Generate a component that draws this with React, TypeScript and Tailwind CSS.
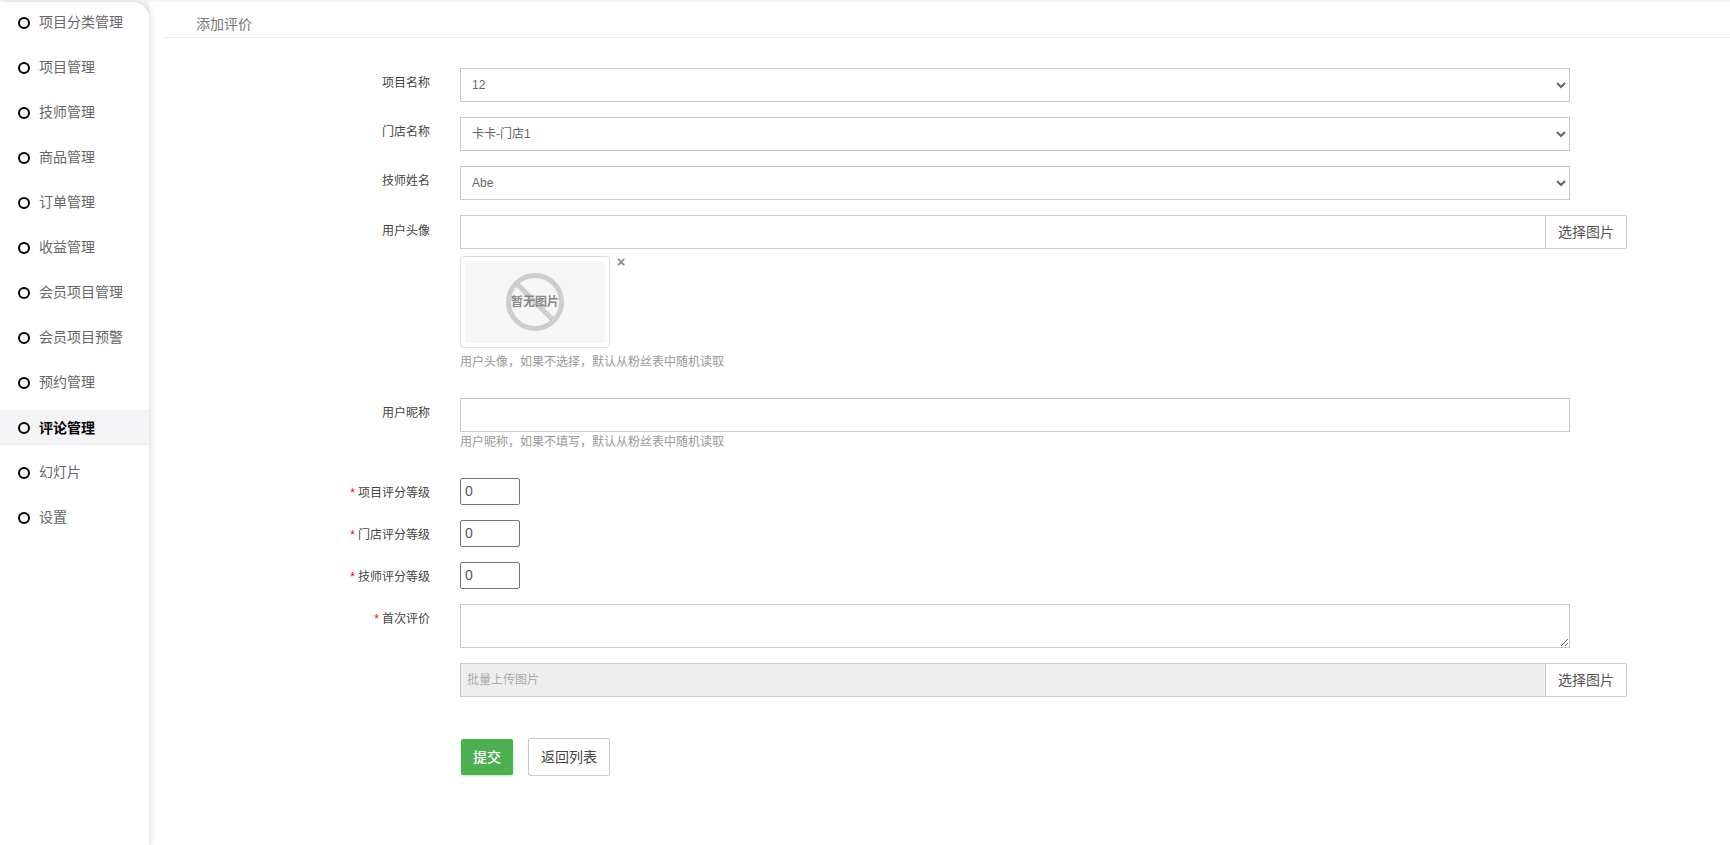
const navItems = [
  '项目分类管理',
  '项目管理',
  '技师管理',
  '商品管理',
  '订单管理',
  '收益管理',
  '会员项目管理',
  '会员项目预警',
  '预约管理',
  '评论管理',
  '幻灯片',
  '设置',
]

const fieldClass = 'h-[34px] w-[1110px] border border-[#c8c8c8] bg-white px-[7px] text-xs text-[#666] outline-none'
const pickButtonClass = 'h-[34px] w-[82px] -ml-px rounded-r-[2px] border border-[#c8c8c8] bg-white text-[14px] text-[#555]'

function Label({ text, required, className = '' }: { text: string; required?: boolean; className?: string }) {
  return (
    <label className={`w-[430px] shrink-0 text-right text-xs text-[#444] ${className}`}>
      {required && <span className="mr-[3px] text-[#f00]">*</span>}
      {text}
    </label>
  )
}

function Sidebar() {
  return (
    <aside className="z-10 h-full w-[149px] shrink-0 rounded-tr-[16px] bg-white shadow-[2px_0_6px_rgba(0,0,0,0.12)]">
      <nav className="-mt-[2px] flex flex-col">
        {navItems.map((item) => {
          const active = item === '评论管理'
          return (
            <div
              key={item}
              className={`flex shrink-0 items-center pl-[18px] text-[14px] ${
                active
                  ? 'my-[5px] h-[35px] border-y border-[#eeeef3] bg-[#f4f4f6] pt-[1px] font-bold text-black'
                  : 'h-[45px] text-[#666]'
              }`}
            >
              <span className="mr-[9px] size-[12px] rounded-full border-2 border-black" />
              {item}
            </div>
          )
        })}
      </nav>
    </aside>
  )
}

function NoImage() {
  return (
    <div className="flex h-[92px] w-[150px] items-center justify-center rounded-[4px] border border-[#ddd] bg-white p-[4px]">
      <div className="relative flex h-[82px] w-[140px] items-center justify-center bg-[#f6f6f6]">
        <svg width="60" height="60" viewBox="0 0 60 60" className="absolute left-[40px] top-[11px]">
          <circle cx="30" cy="30" r="26.5" fill="none" stroke="#cdcdcd" strokeWidth="5" />
          <line x1="11" y1="11" x2="49" y2="49" stroke="#cdcdcd" strokeWidth="5" />
        </svg>
        <span className="relative text-xs font-bold text-[#888]">暂无图片</span>
      </div>
    </div>
  )
}

export default function App() {
  return (
    <div className="flex h-screen w-full overflow-hidden bg-[#f4f4f4] pt-[2px] font-['Liberation_Sans','Noto_Sans_CJK_SC',sans-serif]">
      <Sidebar />

      <main className="flex-1 bg-white">
        <div className="ml-[15px] h-[36px] border-b border-[#eee] pl-[32px] pt-[12px] text-[14px] leading-[20px] text-[#777]">
          添加评价
        </div>

        <form className="-ml-[149px] flex flex-col pt-[30px]">
          <div className="flex gap-[30px]">
            <Label text="项目名称" className="pt-[7px]" />
            <select className={fieldClass} defaultValue="12">
              <option>12</option>
            </select>
          </div>

          <div className="mt-[15px] flex gap-[30px]">
            <Label text="门店名称" className="pt-[7px]" />
            <select className={fieldClass} defaultValue="卡卡-门店1">
              <option>卡卡-门店1</option>
            </select>
          </div>

          <div className="mt-[15px] flex gap-[30px]">
            <Label text="技师姓名" className="pt-[7px]" />
            <select className={fieldClass} defaultValue="Abe">
              <option>Abe</option>
            </select>
          </div>

          <div className="mt-[15px] flex gap-[30px]">
            <Label text="用户头像" className="pt-[8px]" />
            <div>
              <div className="flex">
                <input className="h-[34px] w-[1086px] border border-[#c8c8c8] bg-white px-[6px] text-xs outline-none" />
                <button type="button" className={pickButtonClass}>选择图片</button>
              </div>
              <div className="mt-[7px] flex items-start">
                <NoImage />
                <span className="ml-[7px] text-[14px] font-bold leading-[12px] text-[#888]">×</span>
              </div>
              <p className="mt-[5px] text-xs leading-[18px] text-[#999]">用户头像，如果不选择，默认从粉丝表中随机读取</p>
            </div>
          </div>

          <div className="mt-[27px] flex gap-[30px]">
            <Label text="用户昵称" className="pt-[7px]" />
            <div>
              <input className={fieldClass} />
              <p className="mt-[1px] text-xs leading-[18px] text-[#999]">用户昵称，如果不填写，默认从粉丝表中随机读取</p>
            </div>
          </div>

          {['项目评分等级', '门店评分等级', '技师评分等级'].map((text, i) => (
            <div key={text} className={`flex items-center gap-[30px] ${i === 0 ? 'mt-[27px]' : 'mt-[15px]'}`}>
              <Label text={text} required className="pt-[3px]" />
              <input
                type="number"
                defaultValue={0}
                className="h-[27px] w-[60px] rounded-[2px] border border-[#767676] bg-white px-[4px] pb-[1px] text-[14px] text-[#555] outline-none"
              />
            </div>
          ))}

          <div className="mt-[15px] flex gap-[30px]">
            <Label text="首次评价" required className="pt-[7px]" />
            <textarea className="block h-[44px] w-[1110px] border border-[#c8c8c8] bg-white outline-none" />
          </div>

          <div className="mt-[15px] flex gap-[30px]">
            <div className="w-[430px] shrink-0" />
            <div className="flex">
              <input
                disabled
                placeholder="批量上传图片"
                className="h-[34px] w-[1086px] border border-[#c8c8c8] bg-[#eee] px-[6px] text-xs outline-none placeholder:text-[#aaa]"
              />
              <button type="button" className={pickButtonClass}>选择图片</button>
            </div>
          </div>

          <div className="mt-[41px] flex items-center gap-[30px]">
            <div className="w-[430px] shrink-0" />
            <div className="flex items-center">
              <button
                type="button"
                className="ml-px h-[36px] w-[52px] rounded-[2px] bg-[#4caf50] text-[14px] font-medium text-white shadow-[0_1px_3px_rgba(76,175,80,0.4)]"
              >
                提交
              </button>
              <button
                type="button"
                className="ml-[15px] h-[38px] w-[82px] rounded-[2px] border border-[#c8c8c8] bg-white text-[14px] text-[#444]"
              >
                返回列表
              </button>
            </div>
          </div>
        </form>
      </main>
    </div>
  )
}
